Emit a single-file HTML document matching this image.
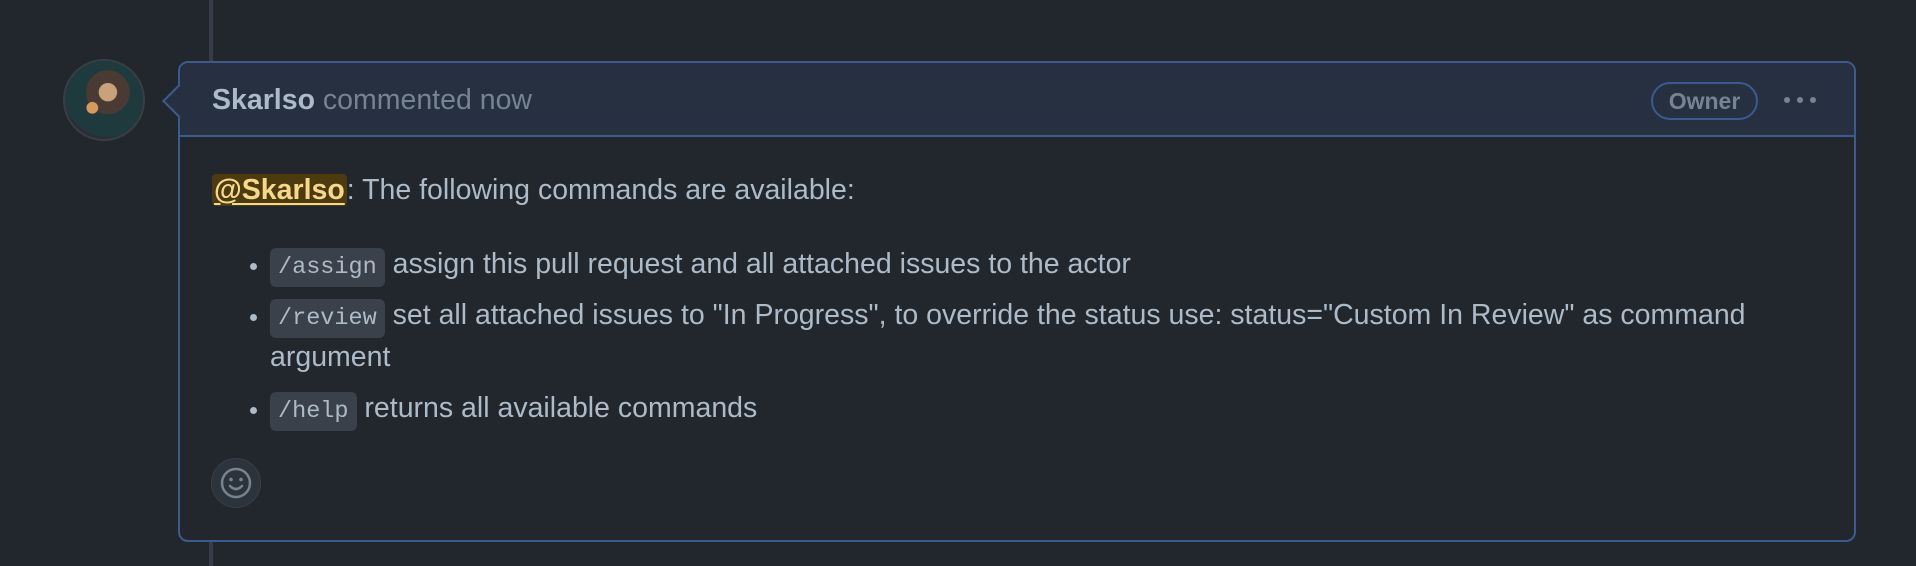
<!DOCTYPE html>
<html><head><style>
body{margin:0;width:1916px;height:566px;background:#22272e;font-family:"Liberation Sans",sans-serif;position:relative;overflow:hidden;color:#adbac7}
.line{position:absolute;left:209px;top:0;width:4px;height:566px;background:#373e47}
.av{position:absolute;left:63px;top:59px;width:82px;height:82px;border-radius:50%;background:radial-gradient(circle at 35% 60%,#d89a5a 0 8%,transparent 9%),radial-gradient(circle at 55% 40%,#c9a27a 0 14%,#4a3a34 15% 34%,#1f3a3c 35% 70%,#2a2d33 71%);border:2px solid #373e47;box-sizing:border-box}
.box{position:absolute;left:178px;top:61px;width:1678px;height:481px;border:2px solid #3b5a8e;border-radius:10px;box-sizing:border-box;background:#22272e}
.hdr{height:72px;background:#263041;border-bottom:2px solid #3b5a8e;border-radius:8px 8px 0 0;position:relative}
.arrow{position:absolute;left:-13px;top:26px;width:22px;height:22px;background:#263041;border-left:2px solid #3b5a8e;border-bottom:2px solid #3b5a8e;transform:rotate(45deg)}
.ht{position:absolute;left:32px;top:21px;font-size:28.5px;color:#768390}
.ht b{color:#adbac7}
.owner{position:absolute;left:1471px;top:19px;width:107px;height:38px;border:2px solid #3b5a8e;border-radius:20px;box-sizing:border-box;font-size:23px;font-weight:bold;color:#768390;text-align:center;line-height:35px}
.dots{position:absolute;left:1604px;top:34px;line-height:0}
.dots i{display:inline-block;width:6px;height:6px;border-radius:50%;background:#768390;margin-right:7px}
.body{position:absolute;left:32px;top:106px;font-size:28.5px;line-height:42px;width:1620px}
.m{background:#4e3a0f;color:#f5d98b;font-weight:bold;border-radius:4px;padding:0 2px;text-decoration:underline;text-decoration-color:#f5d98b;text-underline-offset:4px}
ul{margin:32px 0 0;padding-left:58px}
li{margin:0 0 9px;line-height:42px}
li::marker{font-size:22px}
code{font-family:"Liberation Mono",monospace;font-size:23.5px;line-height:1;background:#3a414b;border-radius:6px;padding:6px 8px;color:#adbac7}
.emo{position:absolute;left:211px;top:458px;width:50px;height:50px;border-radius:50%;background:#2d333b;border:1px solid #373e47;box-sizing:border-box}
</style></head><body>
<div class="line"></div>
<div class="av"></div>
<div class="box">
 <div class="hdr"><div class="arrow"></div>
  <div class="ht"><b>Skarlso</b> commented now</div>
  <div class="owner">Owner</div>
  <div class="dots"><i></i><i></i><i></i></div>
 </div>
 <div class="body">
  <div><span class="m">@Skarlso</span>: The following commands are available:</div>
  <ul>
   <li><code>/assign</code> assign this pull request and all attached issues to the actor</li>
   <li><code>/review</code> set all attached issues to "In Progress", to override the status use: status="Custom In Review" as command argument</li>
   <li><code>/help</code> returns all available commands</li>
  </ul>
 </div>
</div>
<div class="emo"><svg width="48" height="48" viewBox="0 0 48 48" style="position:absolute;left:0;top:0"><circle cx="24" cy="24" r="14" fill="none" stroke="#768390" stroke-width="2.5"/><circle cx="19" cy="20.5" r="1.8" fill="#768390"/><circle cx="29" cy="20.5" r="1.8" fill="#768390"/><path d="M18 27 Q24 33 30 27" fill="none" stroke="#768390" stroke-width="2.5" stroke-linecap="round"/></svg></div>
</body></html>
